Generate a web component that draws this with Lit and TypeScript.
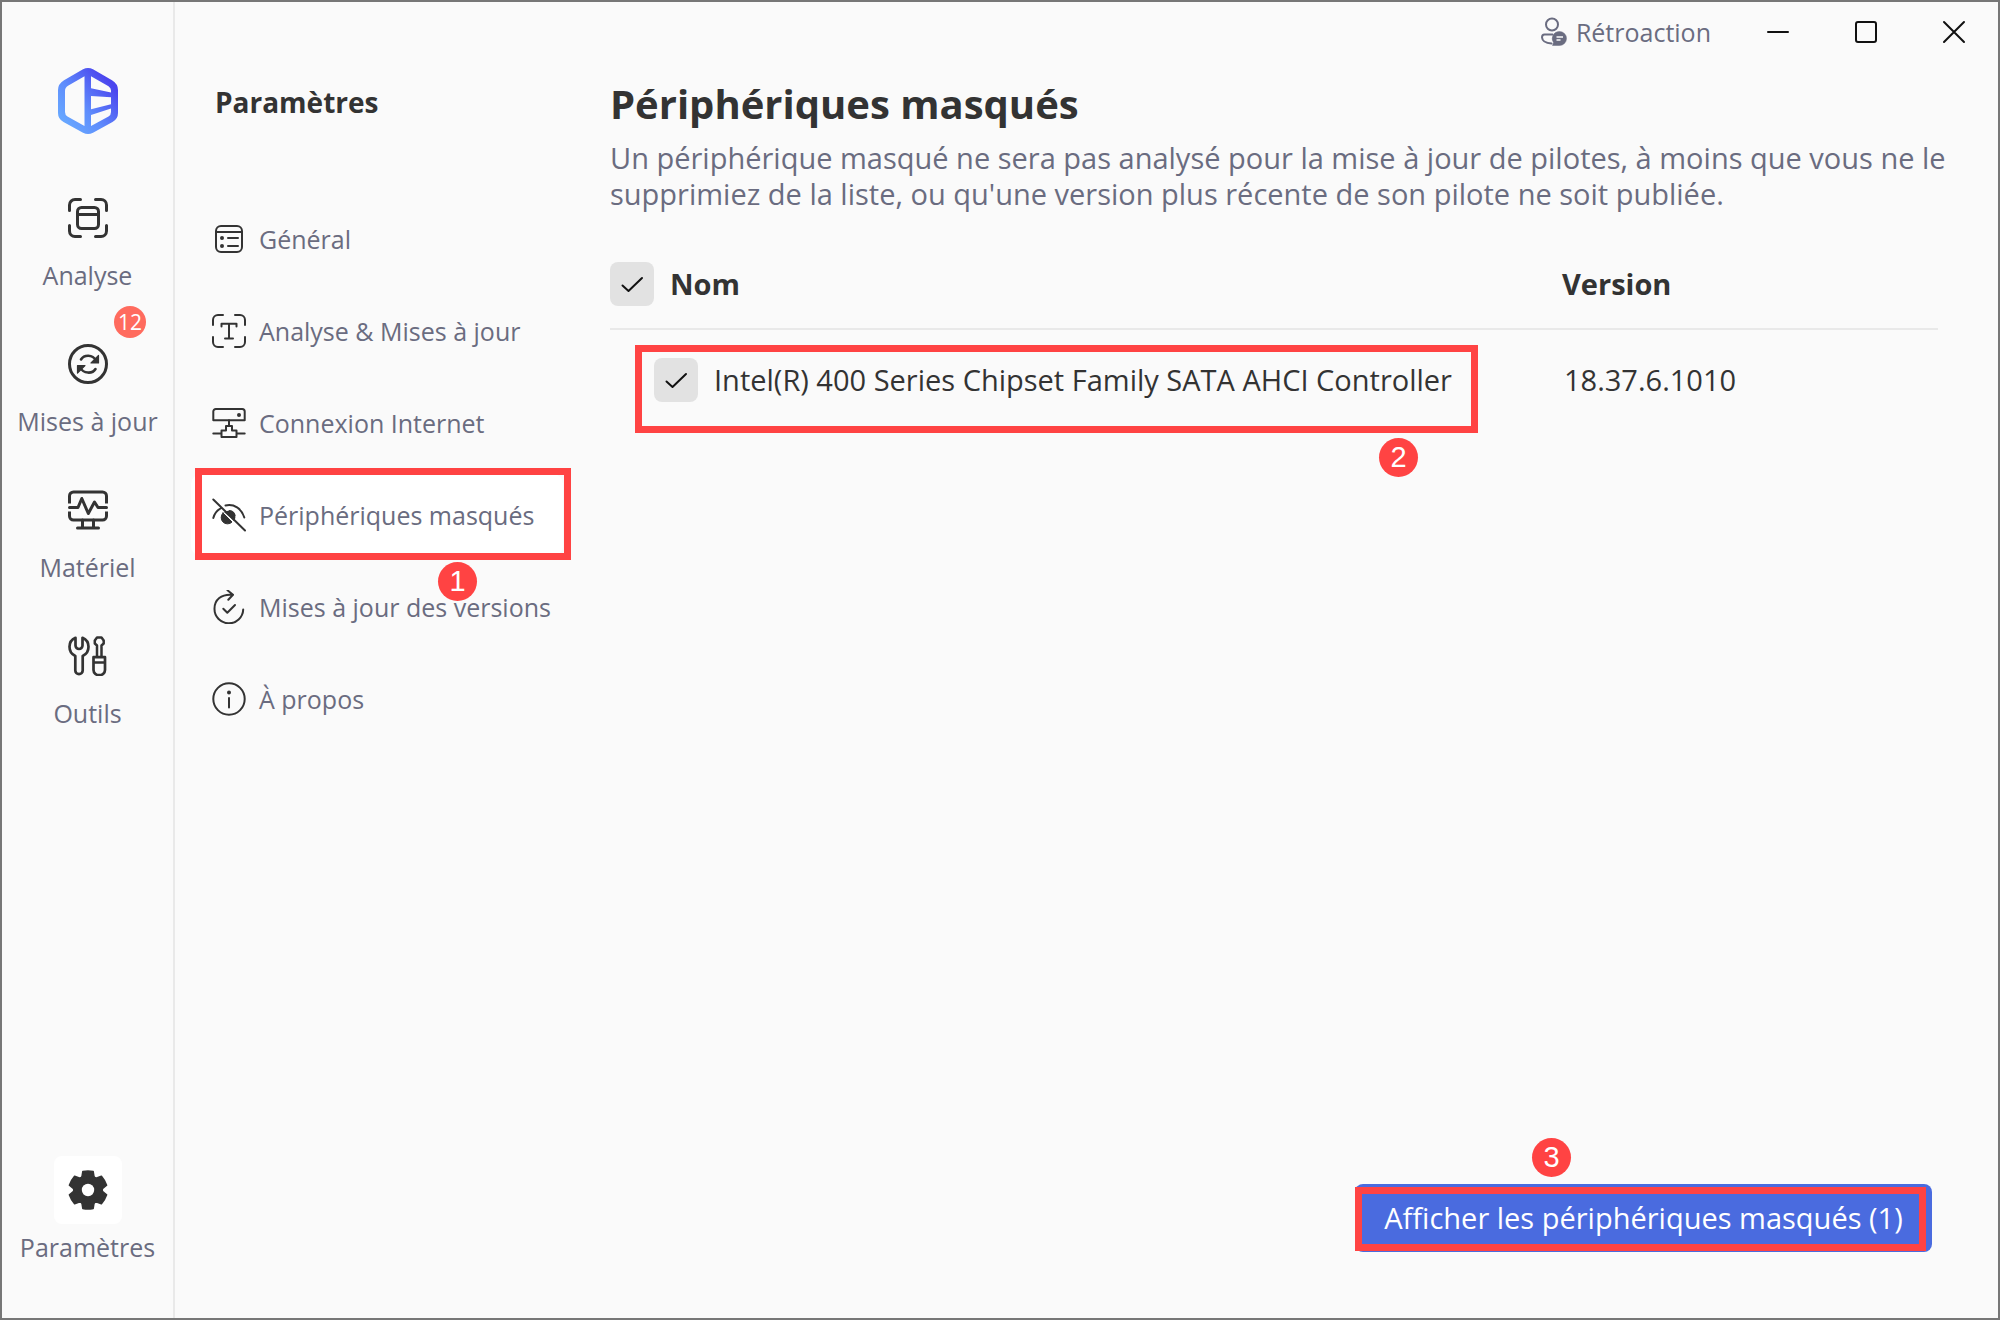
import { LitElement, html, css, svg, nothing, type TemplateResult } from "lit";
import { customElement, property, state } from "lit/decorators.js";
import { classMap } from "lit/directives/class-map.js";

const navIcons: Record<string, TemplateResult> = {
  scan: svg`
    <path d="M1.5 12.5V7A5.500 5.500 0 0 1 7 1.500H12.500M27.500 1.500H33A5.500 5.500 0 0 1 38.500 7V12.500M38.500 27.500V33A5.500 5.500 0 0 1 33 38.500H27.500M12.500 38.500H7A5.500 5.500 0 0 1 1.500 33V27.500"/>
    <rect x="9.500" y="9.500" width="21" height="21" rx="4"/>
    <path d="M9.500 16.500H30.500"/>`,
  update: svg`
    <circle cx="20" cy="20" r="18.500"/>
    <path d="M13 15.500C16 10.500 24.500 10 28 16.500M27.500 25C24.500 30 15.500 30 12 23.500" stroke-width="2.600"/>
    <path d="M30.500 11.500V19H23ZM9.500 29V21.500H17Z" fill="#333" stroke-width="1.200"/>`,
  hardware: svg`
    <path d="M1.500 13.500V6A4 4 0 0 1 5.500 2H34.500A4 4 0 0 1 38.500 6V13.500M1.500 21.500V26A4 4 0 0 0 5.500 30H34.500A4 4 0 0 0 38.500 26V21.500" stroke-linecap="butt"/>
    <path d="M1.500 17.500H10L13.800 8.500L20.300 23.500L26.500 12L30 17.500H38.500"/>
    <path d="M14.500 30V37M25.500 30V37M9.500 38H30.500"/>`,
  tools: svg`
    <path d="M7.500 1.800C3.500 3.500 1.500 7 1.500 10.800C1.500 15 4 18.500 7.300 20V34.500A3.700 3.700 0 0 0 14.700 34.500V20C18 18.500 20.500 15 20.500 10.800C20.500 7 18.500 3.500 14.500 1.800V9.500A3.500 3.500 0 0 1 7.500 9.500Z" stroke-width="2.700"/>
    <path d="M29 20V9.500L26.800 7.500V4.500L29 1.500H33.500L35.700 4.500V7.500L33.500 9.500V20" stroke-width="2.500"/>
    <path d="M25.500 21.200H37V34A5.750 5.200 0 0 1 25.500 34ZM25.500 26.500H37" stroke-width="2.700"/>`,
  gear: svg`
    <g fill="#333" stroke-width="1.500">
      <circle cx="20" cy="20" r="13"/>
      ${[0, 60, 120, 180, 240, 300].map(
        (a) => svg`<path d="M14.800 1.500Q20 0.500 25.200 1.500L26 6.500L30 12H10L14 6.500Z" transform="rotate(${a} 20 20)"/>`
      )}
    </g>
    <circle cx="20" cy="20" r="6.200" fill="#fff" stroke="none"/>`,
};

const menuIcons: Record<string, TemplateResult> = {
  general: svg`
    <rect x="4" y="4" width="26" height="26" rx="5"/>
    <path d="M4 10H30M16 16H26M16 24H26"/>
    <circle cx="10" cy="16" r="1" fill="#333"/><circle cx="10" cy="24" r="1" fill="#333"/>`,
  text: svg`
    <path d="M1 11V6A5 5 0 0 1 6 1H11M23 1H28A5 5 0 0 1 33 6V11M33 23V28A5 5 0 0 1 28 33H23M11 33H6A5 5 0 0 1 1 28V23"/>
    <path d="M9.500 12.500V9.700H24.500V12.500M17 9.700V24.500M13 24.500H21"/>`,
  network: svg`
    <path d="M1.300 14.300V5.500A2.500 2.500 0 0 1 3.800 3H30.200A2.500 2.500 0 0 1 32.700 5.500V14.300Z"/>
    <circle cx="27" cy="9" r="1" fill="#333"/>
    <path d="M17 14.300V20M14 20H20V24.500H24.500V31H9.500V24.500H14ZM1.300 27.500H9.500M24.500 27.500H32.700"/>`,
  hidden: svg`
    <path d="M11 15L20 24A6.200 6.200 0 1 1 11 15Z" fill="#333" stroke-width="1"/>
    <path d="M12 14L22 23A6.500 6.500 0 0 0 17 12.600Z" fill="#333" stroke="none"/>
    <path d="M17.500 12.600A6.500 6.500 0 0 1 23 17.500" stroke-width="1.300"/>
    <path d="M1.300 20C2.500 15.500 5 12.500 8.500 10.500M13.500 7.500C22 5.500 29.500 10.500 32.300 19.500M1.300 1.500L33 32.500"/>`,
  refresh: svg`
    <path d="M21 4.800C9 3.500 2.500 10 2.500 18.500A14.300 14.300 0 0 0 31.200 19.500M15.500 0.300L21 4.800L16.300 9.800"/>
    <path d="M11.300 18.800L15.300 22.800L23 15"/>`,
  info: svg`
    <circle cx="17" cy="17" r="15.700"/>
    <path d="M17 16V25.500"/><circle cx="17" cy="10.600" r="1" fill="#333"/>`,
};

@customElement("check-box")
class CheckBox extends LitElement {
  @property() label = "";
  @property({ type: Boolean }) checked = false;

  static styles = css`
    :host { display: block; flex: none; }
    .box { display: grid; width: 44px; height: 44px; }
    .input, .mark { grid-area: 1 / 1; }
    .input {
      appearance: none; margin: 0; width: 44px; height: 44px;
      border-radius: 8px; background: #e2e2e2; cursor: pointer;
    }
    .mark { width: 44px; height: 44px; fill: none; stroke: #111; stroke-width: 2; stroke-linecap: round; stroke-linejoin: round; pointer-events: none; }
  `;

  render() {
    return html`<label class="box">
      <input class="input" type="checkbox" aria-label=${this.label} .checked=${this.checked}
        @change=${(e: Event) => (this.checked = (e.target as HTMLInputElement).checked)} />
      ${this.checked
        ? html`<svg class="mark" viewBox="0 0 44 44" aria-hidden="true"><path d="M12.500 23.500L18.500 29L32 16"/></svg>`
        : nothing}
    </label>`;
  }
}

@customElement("app-root")
class AppRoot extends LitElement {
  @state() private section = "hidden";

  private nav = [
    { id: "scan", label: "Analyse", count: 0 },
    { id: "update", label: "Mises à jour", count: 12 },
    { id: "hardware", label: "Matériel", count: 0 },
    { id: "tools", label: "Outils", count: 0 },
  ];

  private menu = [
    { id: "general", label: "Général" },
    { id: "text", label: "Analyse & Mises à jour" },
    { id: "network", label: "Connexion Internet" },
    { id: "hidden", label: "Périphériques masqués" },
    { id: "refresh", label: "Mises à jour des versions" },
    { id: "info", label: "À propos" },
  ];

  private devices = [{ name: "Intel(R) 400 Series Chipset Family SATA AHCI Controller", version: "18.37.6.1010" }];

  static styles = css`
    :host { display: block; font-family: "Open Sans", "Noto Sans", sans-serif; color: #333; }
    * { box-sizing: border-box; }
    button { font: inherit; color: inherit; border: 0; padding: 0; background: none; cursor: pointer; }
    svg { display: block; }

    .window {
      display: grid; grid-template-columns: 173px 417px minmax(0, 1fr);
      min-height: 100vh; border: 2px solid #777; background: #fafafa;
    }

    .rail {
      display: flex; flex-direction: column; align-items: center;
      padding: 66px 0 56px; border-right: 2px solid #e9e9e9;
    }
    .rail-list { display: flex; flex-direction: column; gap: 40px; margin-top: 50px; }
    .rail-item {
      position: relative; display: flex; flex-direction: column; align-items: center; gap: 8px;
      width: 171px; font-size: 25px; line-height: 30px; color: #6a6c80; white-space: nowrap;
    }
    .rail-item.current { margin-top: auto; }
    .rail-icon { display: grid; place-items: center; width: 68px; height: 68px; border-radius: 8px; }
    .current .rail-icon { background: #fff; }
    .rail-icon svg { width: 40px; height: 40px; }
    .line { fill: none; stroke: #333; stroke-width: 3; stroke-linecap: round; stroke-linejoin: round; }
    .count {
      position: absolute; top: -24px; right: 27px; width: 32px; height: 32px; border-radius: 50%;
      background: #ff6b5e; color: #fff; font-size: 21px; line-height: 32px; text-align: center;
    }

    .settings { padding: 80px 0 0 16px; }
    .settings-title { margin: 0 0 76px; padding-left: 24px; font-size: 28px; line-height: 40px; font-weight: 700; }
    .menu { display: flex; flex-direction: column; gap: 10px; }
    .menu-item {
      position: relative; display: flex; align-items: center; gap: 13px; width: 372px; height: 82px;
      padding-left: 21px; border-radius: 10px; font-size: 25px; line-height: 34px; color: #6a6c80; white-space: nowrap;
    }
    .menu-item.active { background: #fff; }
    .menu-item svg { width: 34px; height: 34px; flex: none; stroke-width: 2; }

    .main { display: flex; flex-direction: column; padding: 0 60px 66px 18px; }
    .titlebar { display: flex; align-items: center; justify-content: flex-end; height: 60px; margin-right: -28px; }
    .feedback { display: flex; align-items: center; gap: 8px; margin-right: 55px; font-size: 25px; line-height: 34px; color: #6a6c80; }
    .controls { display: flex; gap: 64px; }
    .controls svg { width: 24px; height: 24px; fill: none; stroke: #111; stroke-width: 2; stroke-linecap: round; }

    .title { margin: 14px 0 0; font-size: 40px; line-height: 56px; font-weight: 700; }
    .intro { margin: 8px -16px 0 0; font-size: 29px; line-height: 36px; color: #6a6c80; }

    .devices { width: 100%; margin-top: 50px; border-collapse: collapse; table-layout: fixed; font-size: 29px; line-height: 44px; text-align: left; }
    .devices th, .devices td { padding: 0; font-weight: 400; }
    .devices th { padding-bottom: 22px; font-weight: 700; border-bottom: 2px solid #e9e9e9; }
    .devices td { padding: 28px 0 0 44px; }
    .devices td.version { padding-left: 2px; }
    .col-version { width: 376px; }
    .cell { display: flex; align-items: center; gap: 16px; white-space: nowrap; }
    .cell.device { position: relative; width: max-content; }

    .reveal {
      position: relative; align-self: flex-end; margin: auto 6px 0 0; width: 577px; height: 68px;
      border-radius: 8px; background: #4a6bdf; color: #fff; font-size: 29px; line-height: 40px; white-space: nowrap;
    }

    .outline { position: absolute; border: 7px solid #ff4343; pointer-events: none; }
    .step {
      position: absolute; width: 39px; height: 39px; border-radius: 50%; background: #ff4343; color: #fff;
      font-family: "Liberation Sans", sans-serif; font-size: 29px; line-height: 39px; font-weight: 400; text-align: center;
      z-index: 1; pointer-events: none;
    }
    .outline-menu { inset: -6px -8px -4px 4px; }
    .step-menu { left: 247px; top: 88px; }
    .outline-device { inset: -13px -26px -31px -19px; }
    .step-device { right: 34px; bottom: -75px; }
    .outline-reveal { inset: 3px 6px 1px 0; }
    .step-reveal { left: 177px; top: -46px; }
  `;

  private logo() {
    return html`<svg width="60" height="66" viewBox="0 0 60 66" role="img" aria-label="Logo">
      <defs><linearGradient id="brand" x1="0.150" y1="0.850" x2="0.850" y2="0.200">
        <stop offset="0" stop-color="#67a6ff"/><stop offset="0.400" stop-color="#5f8dfc"/><stop offset="1" stop-color="#4b45ee"/>
      </linearGradient></defs>
      <path fill="url(#brand)" fill-rule="evenodd" d="M25 1.200Q30 -1.200 35 1.200L54 12.300Q60 16 60 22V45Q60 51 54.500 54L35 64.800Q30 67.200 25 64.800L5.500 54Q0 51 0 45V22Q0 16 6 12.300Z
        M26.500 8.300L10 17.800Q7 19.500 7 23V44Q7 47 9.500 48.500L26.500 58Z
        M33 8.300L50.500 18.300Q53 20 53 22.500V24.500L33 20.300Z
        M33 28L53 29.300V36.300L33 41.300Z
        M33 47L53 40.500V44Q53 47 50.500 48.500L33 58Z"/>
    </svg>`;
  }

  private railItem(id: string, label: string, count = 0, current = false) {
    return html`<button class=${classMap({ "rail-item": true, current })}>
      <span class="rail-icon"><svg class="line" viewBox="0 0 40 40" aria-hidden="true">${navIcons[id]}</svg></span>
      <span>${label}</span>
      ${count ? html`<span class="count">${count}</span>` : nothing}
    </button>`;
  }

  render() {
    return html`<div class="window">
      <nav class="rail">
        ${this.logo()}
        <div class="rail-list">${this.nav.map((n) => this.railItem(n.id, n.label, n.count))}</div>
        ${this.railItem("gear", "Paramètres", 0, true)}
      </nav>

      <aside class="settings">
        <h2 class="settings-title">Paramètres</h2>
        <div class="menu">
          ${this.menu.map(
            (m) => html`<button class=${classMap({ "menu-item": true, active: this.section === m.id })} @click=${() => (this.section = m.id)}>
              <svg class="line" viewBox="0 0 34 34" aria-hidden="true">${menuIcons[m.id]}</svg>
              <span>${m.label}</span>
              ${m.id === "hidden" ? html`<span class="outline outline-menu"></span><span class="step step-menu">1</span>` : nothing}
            </button>`
          )}
        </div>
      </aside>

      <main class="main">
        <header class="titlebar">
          <button class="feedback">
            <svg width="28" height="30" viewBox="0 0 28 30" fill="none" stroke="#6a6c80" stroke-width="2" aria-hidden="true">
              <circle cx="12" cy="7.500" r="6"/>
              <path d="M12.500 17.500H4.500Q2 17.500 2 20.500Q2.500 26 11.500 26.500" stroke-linecap="round"/>
              <path d="M19.500 14.500A7 7 0 1 1 19.500 28.500H12.500L13.500 25.500A7 7 0 0 1 19.500 14.500Z" fill="#6a6c80" stroke-width="0.500"/>
              <path d="M16.500 20H23M16.500 23H20.500" stroke="#fafafa" stroke-width="1.500"/>
            </svg>
            <span>Rétroaction</span>
          </button>
          <div class="controls">
            <button aria-label="Réduire"><svg viewBox="0 0 24 24"><path d="M2 12H22"/></svg></button>
            <button aria-label="Agrandir"><svg viewBox="0 0 24 24"><rect x="2" y="2" width="20" height="20" rx="2"/></svg></button>
            <button aria-label="Fermer"><svg viewBox="0 0 24 24"><path d="M2 2L22 22M22 2L2 22"/></svg></button>
          </div>
        </header>

        <h1 class="title">Périphériques masqués</h1>
        <p class="intro">Un périphérique masqué ne sera pas analysé pour la mise à jour de pilotes, à moins que vous ne le supprimiez de la liste, ou qu'une version plus récente de son pilote ne soit publiée.</p>

        <table class="devices">
          <colgroup><col /><col class="col-version" /></colgroup>
          <thead>
            <tr>
              <th scope="col"><div class="cell"><check-box label="Nom" checked></check-box><span>Nom</span></div></th>
              <th scope="col">Version</th>
            </tr>
          </thead>
          <tbody>
            ${this.devices.map(
              (d) => html`<tr>
                <td><div class="cell device">
                  <check-box label=${d.name} checked></check-box><span>${d.name}</span>
                  <span class="outline outline-device"></span><span class="step step-device">2</span>
                </div></td>
                <td class="version">${d.version}</td>
              </tr>`
            )}
          </tbody>
        </table>

        <button class="reveal">
          Afficher les périphériques masqués (${this.devices.length})
          <span class="outline outline-reveal"></span><span class="step step-reveal">3</span>
        </button>
      </main>
    </div>`;
  }
}
